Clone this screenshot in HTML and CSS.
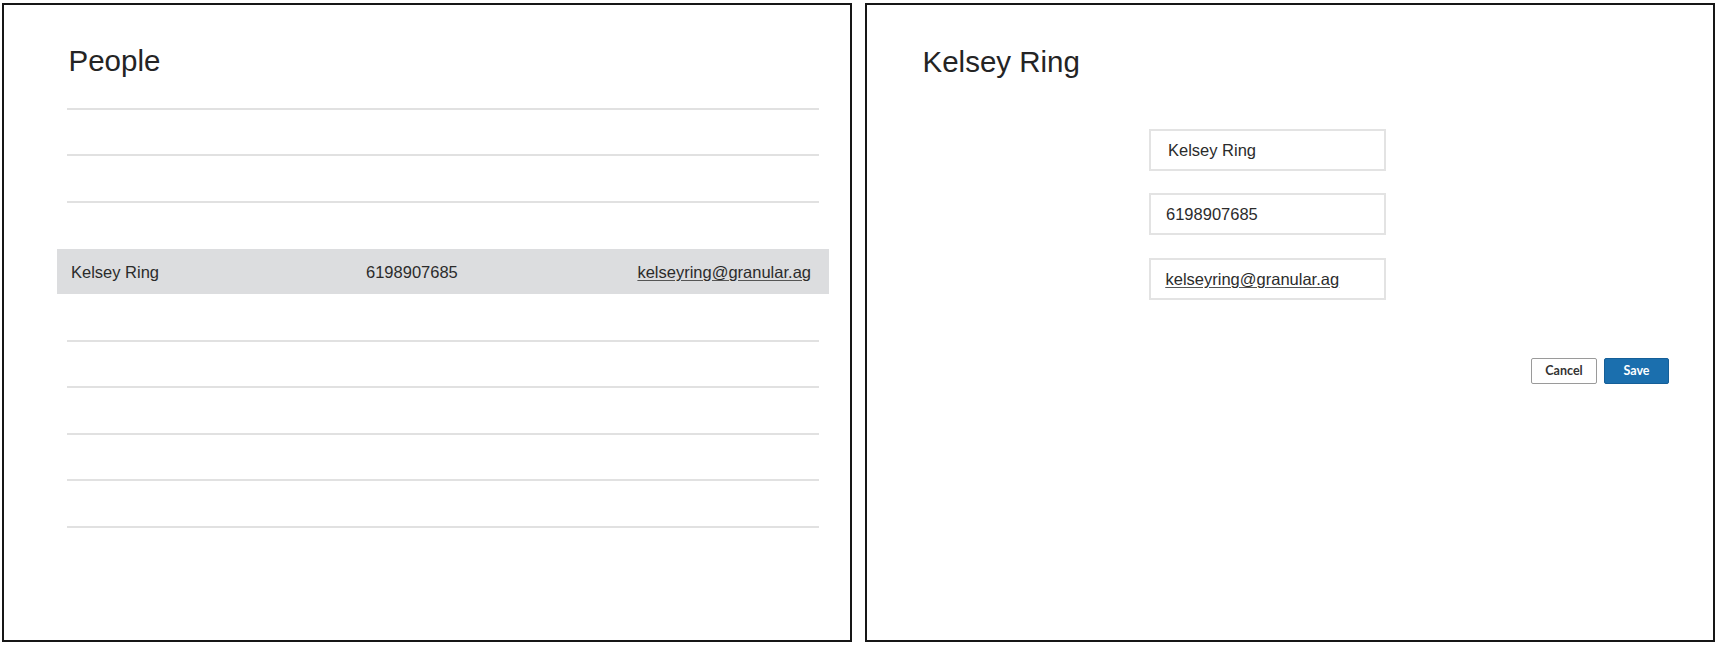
FILE: index.html
```html
<!DOCTYPE html>
<html>
<head>
<meta name="viewport" content="width=device-width, initial-scale=1.0">
<link rel="stylesheet" href="styles.css">
</head>
<body>
<div id=page>

<div class="panel people">
<h1>People</h1>
<div class=list>
<div class=row></div>
<div class=row></div>
<div class=row></div>
<div class="row active">
  <span class=name>Kelsey Ring</span>
  <span class=phone>6198907685</span>
  <a class=email href="#">kelseyring@granular.ag</a>
</div>
<div class=row></div>
<div class=row></div>
<div class=row></div>
<div class=row></div>
<div class=row></div>
</div>
</div>

<div class="panel detail">
<h1>Kelsey Ring</h1>
<div class=form>
<div class="field name">Kelsey Ring</div>
<div class="field phone">6198907685</div>
<div class="field email"><a href="#">kelseyring@granular.ag</a></div>
</div>
<div class=actions>
<button class=cancel>Cancel</button>
<button class=save>Save</button>
</div>
</div>

</div>
</body>
</html>
```

FILE: styles.css
```css
body, html {
  margin:0;
  padding:0;
  background:#fff;
}

body {
  font-family:"Liberation Sans", Arial, sans-serif;
  color:#2b2b2b;
}

#page {
  display:flex;
  gap:12.5px;
  padding:3px 0 0 2px;
}

.panel {
  box-sizing:border-box;
  width:850px;
  height:638.5px;
  border:2px solid #161616;
}

h1 {
  font-weight:normal;
  font-size:29.5px;
  line-height:36px;
  color:#242424;
  margin:0;
}

.people h1 {
  margin:37.6px 0 0 64.5px;
}

.detail h1 {
  margin:39.3px 0 0 56px;
}

/* list */

.list {
  margin:29.4px 31px 0 63px;
  border-bottom:2px solid #e1e1e1;
}

.row {
  box-sizing:border-box;
  height:46.4px;
  border-top:2px solid #e1e1e1;
  display:grid;
  grid-template-columns:295px 1fr auto;
  align-items:center;
  font-size:16.5px;
}

.row.active {
  margin:0 -10px;
  padding:3px 18px 0 14px;
  border-top-color:#fff;
  background:#dcdddf;
  background-clip:padding-box;
}

.row.active + .row {
  border-top-color:transparent;
}

.email, .field a {
  color:#2b2b2b;
  text-decoration:underline;
  text-decoration-color:#555;
  text-underline-offset:2px;
}

/* form */

.form {
  display:flex;
  flex-direction:column;
  gap:22.5px;
  margin:48.7px 0 0 282.5px;
}

.field {
  box-sizing:border-box;
  width:237px;
  height:42px;
  border:2px solid #e3e3e3;
  padding:1px 0 0 15px;
  display:flex;
  align-items:center;
  font-size:16.5px;
}

.field.name {
  padding-left:17px;
}

.field.email {
  padding-left:14.5px;
}

.actions {
  display:flex;
  justify-content:flex-end;
  gap:7px;
  margin:58px 43.5px 0 0;
}

button {
  box-sizing:border-box;
  height:26px;
  border-radius:2px;
  font-family:Lato, "Liberation Sans", sans-serif;
  font-weight:bold;
  font-size:12.5px;
  padding:0;
}

.cancel {
  width:66px;
  background:#fff;
  color:#333;
  border:1px solid #9a9a9a;
}

.save {
  width:65px;
  background:#1b6fae;
  color:#fff;
  border:1px solid #155f98;
}
```
